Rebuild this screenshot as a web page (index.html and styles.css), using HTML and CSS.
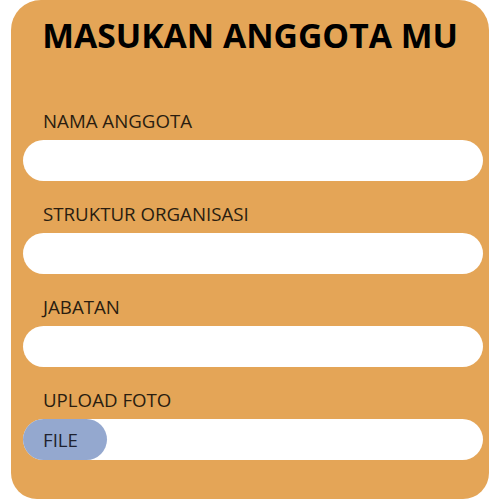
FILE: index.html
```html
<!DOCTYPE html>
<html>
<head>
<meta charset="utf-8">
<link rel="stylesheet" href="styles.css">
</head>
<body>
<div class="card">
  <h1 class="title">MASUKAN ANGGOTA MU</h1>
  <div class="field">
    <label class="label">NAMA ANGGOTA</label>
    <div class="input"></div>
  </div>
  <div class="field">
    <label class="label">STRUKTUR ORGANISASI</label>
    <div class="input"></div>
  </div>
  <div class="field">
    <label class="label">JABATAN</label>
    <div class="input"></div>
  </div>
  <div class="field">
    <label class="label">UPLOAD FOTO</label>
    <div class="input"><span class="file">FILE</span></div>
  </div>
</div>
</body>
</html>
```
FILE: styles.css
```css
html, body {
  margin: 0;
  padding: 0;
  background: #ffffff;
}
body {
  font-family: "Open Sans", sans-serif;
}
.card {
  margin-left: 11px;
  width: 478px;
  height: 499px;
  box-sizing: border-box;
  background: #e4a557;
  border-radius: 30px 30px 26px 26px;
  padding: 13px 6px 0 12px;
  display: flex;
  flex-direction: column;
}
.title {
  margin: 0 0 52px 0;
  text-align: center;
  font-size: 33.7px;
  font-weight: 700;
  line-height: 44px;
  color: #000;
  padding-right: 6px;
}
.field {
  display: flex;
  flex-direction: column;
  margin-bottom: 21px;
}
.label {
  padding-left: 20px;
  font-size: 18.7px;
  line-height: 24px;
  color: #2a1d10;
  margin-bottom: 7px;
}
.input {
  height: 41px;
  background: #ffffff;
  border-radius: 21px;
  display: flex;
}
.file {
  width: 84px;
  height: 41px;
  box-sizing: border-box;
  background: #94a8cf;
  border-radius: 21px;
  padding-left: 20px;
  font-size: 18.7px;
  line-height: 41px;
  color: #1e2230;
}
```
